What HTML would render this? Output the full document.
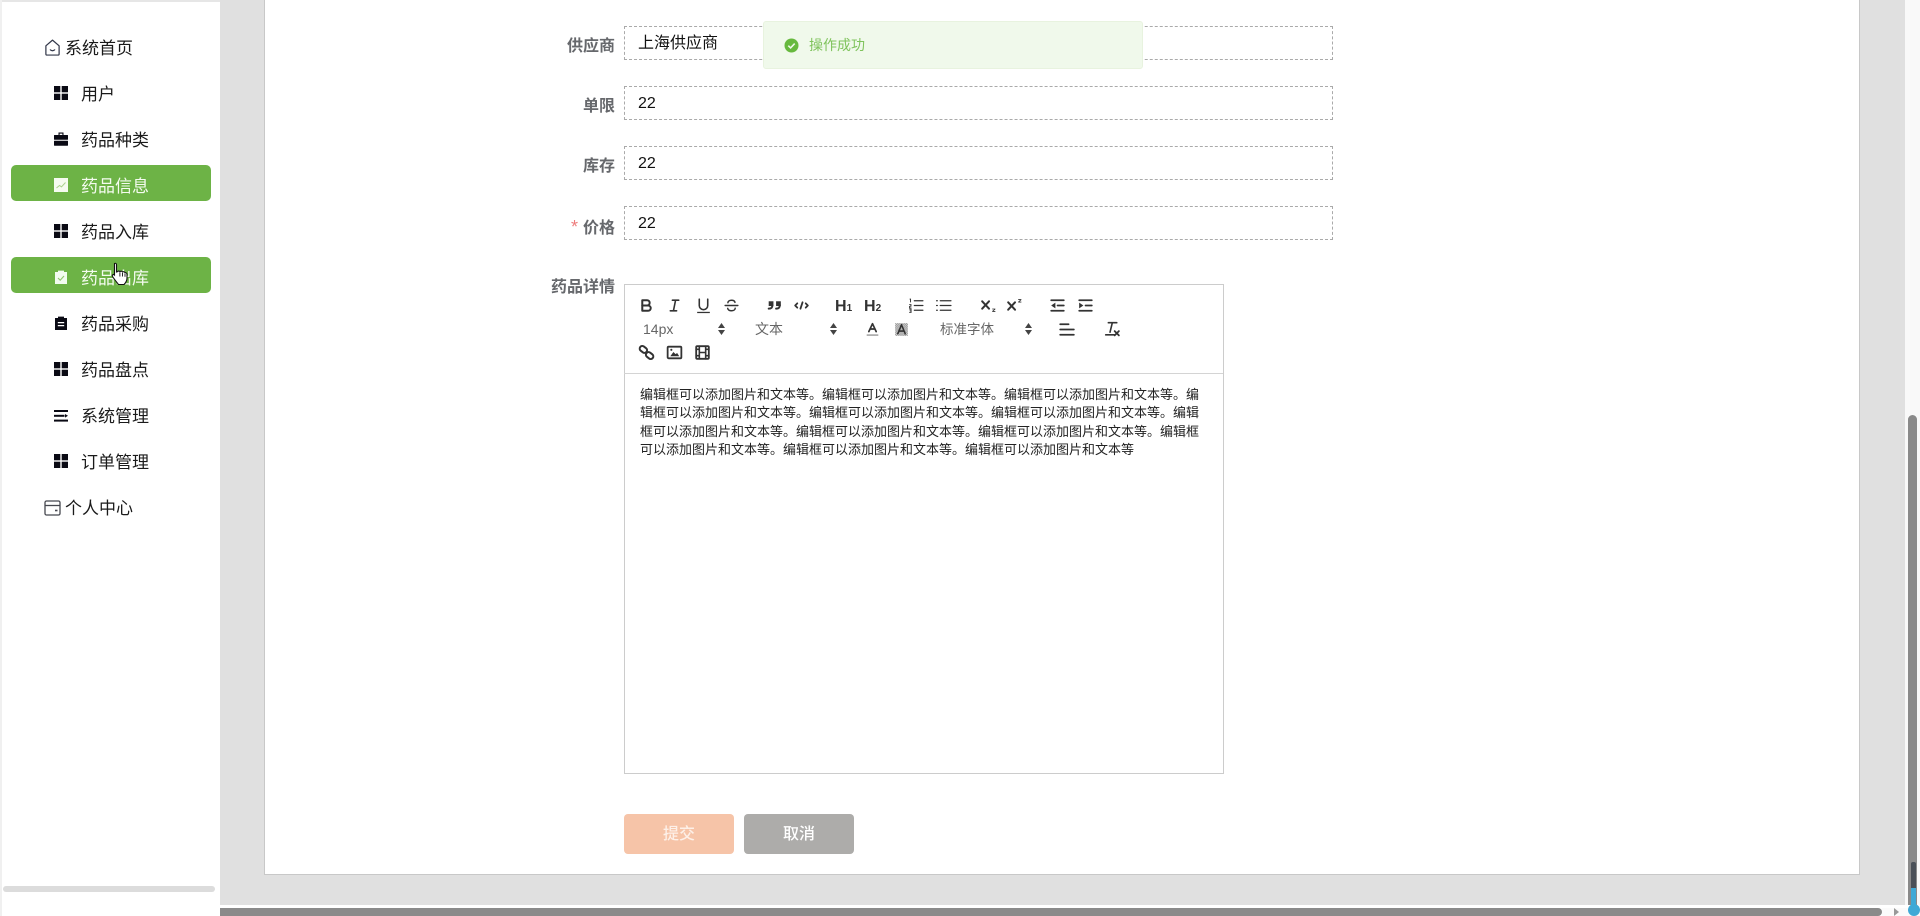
<!DOCTYPE html>
<html lang="zh">
<head>
<meta charset="utf-8">
<title>药品信息</title>
<style>
html,body{margin:0;padding:0;width:1920px;height:916px;overflow:hidden;background:#fff}
body{position:relative;font-family:"Liberation Sans","Noto Sans CJK SC",sans-serif;color:#111}
.a{position:absolute}
#side{left:2px;top:2px;width:218px;height:914px;background:#fff}
#bg{left:220px;top:0;width:1685px;height:905px;background:#e0e0e0}
#panel{left:264px;top:0;width:1594px;height:874px;background:#fff;border:1px solid #c8c8c8;border-top:none}
.hl{left:11px;width:200px;height:36px;background:#6db346;border-radius:5px}
.m{left:81px;height:24px;line-height:24px;font-size:17px;color:#1a1a1a;white-space:nowrap;margin-top:1px}
.m.w{color:#f4fbef}
.m.t{left:65px}
.i{left:54px;width:14px;height:14px}
.lb{height:24px;line-height:24px;font-size:16px;font-weight:700;color:#66686c;right:1305px;white-space:nowrap;margin-top:1.500px}
.inp{left:624px;width:707px;height:32px;border:1px dashed #aaa;box-sizing:content-box;font-size:16px;line-height:33px;color:#111;text-indent:13px}
#ed{left:624px;top:284px;width:598px;height:488px;border:1px solid #ccc;background:#fff}
#edl{left:624px;top:373px;width:599px;height:1px;background:#d4d4d4}
.ic{width:19px;height:19px;margin:1.500px;fill:none;stroke:#333;stroke-width:1.900;stroke-linecap:round;stroke-linejoin:round}
.ic .f{fill:#333;stroke:none}
.sel{font-size:13px;color:#666;height:20px;line-height:20px;white-space:nowrap}
.ar{width:9px;height:14px}
.hh{font-size:16px;font-weight:700;color:#333;height:22px;line-height:22px;white-space:nowrap;margin-top:1.500px}
.hh small{font-size:10px}
#txt{left:640px;top:386px;width:562px;font-size:13px;line-height:18.400px;color:#222;white-space:nowrap}
.btn{top:814px;width:110px;height:40px;border-radius:4px;color:#fff;font-size:16px;font-weight:500;line-height:41px;text-align:center}
#toast{left:763px;top:21px;width:380px;height:48px;background:#f0f9eb;border:1px solid #e8f3df;border-radius:3px;box-sizing:border-box}
#tt{left:809px;top:35px;font-size:14px;line-height:20px;color:#7fc35c;white-space:nowrap}
</style>
</head>
<body>
<div class="a" style="left:0;top:0;width:1920px;height:2px;background:#e6e6e6"></div>
<div class="a" style="left:0;top:0;width:2px;height:916px;background:#f0f0f0"></div>
<div class="a" id="side"></div>
<div class="a" id="bg"></div>
<div class="a" id="panel"></div>

<div class="a hl" style="top:165px"></div>
<div class="a hl" style="top:257px"></div>

<svg class="a" style="left:44px;top:39px" width="17" height="17" viewBox="0 0 17 18" fill="none" stroke="#33384a" stroke-width="1.300" stroke-linejoin="round"><path d="M1.500 7.200 8.500 1.200 15.500 7.200V16a1 1 0 0 1-1 1h-12a1 1 0 0 1-1-1Z"/><path d="M6.200 11.500c1.200 1.200 3.400 1.200 4.600 0" stroke-linecap="round"/></svg>
<div class="a m t" style="top:36px">系统首页</div>

<svg class="a i" style="top:86px" viewBox="0 0 14 14" fill="#0a0a14"><rect width="6.300" height="6.300"/><rect x="7.700" width="6.300" height="6.300"/><rect y="7.700" width="6.300" height="6.300"/><rect x="7.700" y="7.700" width="6.300" height="6.300"/></svg>
<div class="a m" style="top:82px">用户</div>

<svg class="a i" style="top:132px" viewBox="0 0 14 14" fill="#0a0a14"><path d="M4.500 3V.5h5V3H8.400V1.600H5.600V3Z"/><rect y="3" width="14" height="4.800" rx=".4"/><rect y="8.700" width="14" height="5" rx=".4"/></svg>
<div class="a m" style="top:128px">药品种类</div>

<svg class="a i" style="top:178px" viewBox="0 0 14 14"><rect width="14" height="14" fill="#f5fbf0"/><path d="M2.500 10 5.500 7.500 7.500 8.800 11.500 4.500" stroke="#a9d18c" stroke-width="1" fill="none"/></svg>
<div class="a m w" style="top:174px">药品信息</div>

<svg class="a i" style="top:224px" viewBox="0 0 14 14" fill="#0a0a14"><rect width="6.300" height="6.300"/><rect x="7.700" width="6.300" height="6.300"/><rect y="7.700" width="6.300" height="6.300"/><rect x="7.700" y="7.700" width="6.300" height="6.300"/></svg>
<div class="a m" style="top:220px">药品入库</div>

<svg class="a i" style="top:270px" viewBox="0 0 14 14"><path d="M1 2h3V.6h6V2h3v12H1Z" fill="#f2fbf0"/><path d="M4 8 6.200 10.200 10 6" stroke="#8fc46e" stroke-width="1.100" fill="none"/></svg>
<div class="a m w" style="top:266px">药品出库</div>

<svg class="a i" style="top:316px" viewBox="0 0 14 14" fill="#0a0a14"><path d="M1 2h3V.6h6V2h3v12H1Zm2.800 4v1.200h6.400V6Zm0 3v1.200h6.400V9Z" fill-rule="evenodd"/></svg>
<div class="a m" style="top:312px">药品采购</div>

<svg class="a i" style="top:362px" viewBox="0 0 14 14" fill="#0a0a14"><rect width="6.300" height="6.300"/><rect x="7.700" width="6.300" height="6.300"/><rect y="7.700" width="6.300" height="6.300"/><rect x="7.700" y="7.700" width="6.300" height="6.300"/></svg>
<div class="a m" style="top:358px">药品盘点</div>

<svg class="a i" style="top:409px" viewBox="0 0 14 14" fill="#0a0a14"><rect y="1" width="14" height="2"/><rect y="5.800" width="10.500" height="2"/><path d="M11 5 14 6.800 11 8.600Z"/><rect y="10.600" width="14" height="2"/></svg>
<div class="a m" style="top:404px">系统管理</div>

<svg class="a i" style="top:454px" viewBox="0 0 14 14" fill="#0a0a14"><rect width="6.300" height="6.300"/><rect x="7.700" width="6.300" height="6.300"/><rect y="7.700" width="6.300" height="6.300"/><rect x="7.700" y="7.700" width="6.300" height="6.300"/></svg>
<div class="a m" style="top:450px">订单管理</div>

<svg class="a" style="left:44px;top:500px" width="17" height="16" viewBox="0 0 17 16" fill="none" stroke="#45474f" stroke-width="1.300"><rect x="1" y="1" width="15" height="14" rx="1.500"/><path d="M1 5.500h15"/><path d="M11 10.500h2.500" stroke-width="1.600"/></svg>
<div class="a m t" style="top:496px">个人中心</div>

<div class="a" style="left:3px;top:886px;width:212px;height:6px;background:#dcdcdc;border-radius:3px"></div>

<!-- form -->
<div class="a lb" style="top:33px">供应商</div>
<div class="a inp" style="top:26px">上海供应商</div>
<div class="a lb" style="top:93px">单限</div>
<div class="a inp" style="top:86px">22</div>
<div class="a lb" style="top:153px">库存</div>
<div class="a inp" style="top:146px">22</div>
<div class="a lb" style="top:213px"><span style="color:#ee7c7c;font-weight:400;font-size:18px;margin-right:5px">*</span>价格</div>
<div class="a inp" style="top:206px">22</div>
<div class="a lb" style="top:274px">药品详情</div>

<div class="a" id="ed"></div>
<div class="a" id="edl"></div>

<!-- toolbar row 1 -->
<svg class="a ic" style="left:635px;top:294px" viewBox="0 0 18 18"><path d="M5,4H9.500A2.500,2.500,0,0,1,9.500,9H5Z"/><path d="M5,9h5.500A2.500,2.500,0,0,1,10.500,14H5Z"/></svg>
<svg class="a ic" style="left:663px;top:294px" viewBox="0 0 18 18"><path stroke-width="1.500" d="M7 4h6M5 14h6M8 14 10 4"/></svg>
<svg class="a ic" style="left:692px;top:294px" viewBox="0 0 18 18"><path stroke-width="1.500" d="M5,3V9a4,4,0,0,0,8,0V3"/><rect class="f" x="3" y="15" width="12" height="1.200"/></svg>
<svg class="a ic" style="left:720px;top:294px" viewBox="0 0 18 18"><path stroke-width="1.400" d="M3 9H15M12.300 6C12 4.600 10.600 4 9 4 7 4 5.600 5 5.600 6.400M12.500 11.600C12.500 13 11 14 9 14 7 14 5.500 13 5.400 11.700"/></svg>
<svg class="a ic" style="left:763px;top:294px" viewBox="0 0 18 18"><rect class="f" x="3.500" y="5" width="4.500" height="4.500"/><rect class="f" x="10.500" y="5" width="4.500" height="4.500"/><path d="M7 8.500C7 11 6 12 3.500 12M14 8.500C14 11 13 12 10.500 12"/></svg>
<svg class="a ic" style="left:790px;top:294px" viewBox="0 0 18 18"><path d="M5 7 3 9 5 11M13 7 15 9 13 11M10 6 8 12" stroke-width="1.700"/></svg>
<div class="a hh" style="left:835px;top:294px">H<small>1</small></div>
<div class="a hh" style="left:864px;top:294px">H<small>2</small></div>
<svg class="a ic" style="left:905px;top:294px" viewBox="0 0 18 18"><path stroke-width="1.300" d="M7 4.500h8M7 9h8M7 13.500h8"/><path class="f" d="M2.500 2.500h1.300v3.500h-.9V3.400h-.4ZM2 7.700h2.200v2.400H3v.9h1.300v.7H2V9.400h1.200v-1H2ZM2 12h2.300v4H2v-.7h1.300v-.9H2.400v-.7h.9v-.9H2Z"/></svg>
<svg class="a ic" style="left:932px;top:294px" viewBox="0 0 18 18"><path stroke-width="1.300" d="M6 4.500h10M6 9h10M6 13.500h10"/><path stroke-width="1.300" d="M2.500 4.500h.6M2.500 9h.6M2.500 13.500h.6"/></svg>
<svg class="a ic" style="left:977px;top:294px" viewBox="0 0 18 18"><path stroke-width="1.900" d="M3 5 9.500 12M9.500 5 3 12"/><path class="f" d="M12.500 12h3v.7l-1.800 1.500h1.800v.8h-3v-.7l1.800-1.600h-1.800Z"/></svg>
<svg class="a ic" style="left:1003px;top:294px" viewBox="0 0 18 18"><path stroke-width="1.900" d="M3 6 9.500 13M9.500 6 3 13"/><path class="f" d="M12.500 3h3v.8l-1.800 1.500h1.800v.8h-3v-.7l1.800-1.600h-1.800Z"/></svg>
<svg class="a ic" style="left:1046px;top:294px" viewBox="0 0 18 18"><path stroke-width="1.600" d="M3 4h12M9 9h6M3 14h12"/><path class="f" d="M7 6.300V11.700L3 9Z"/></svg>
<svg class="a ic" style="left:1074px;top:294px" viewBox="0 0 18 18"><path stroke-width="1.600" d="M3 4h12M9 9h6M3 14h12"/><path class="f" d="M3 6.300V11.700L7 9Z"/></svg>

<!-- toolbar row 2 -->
<div class="a sel" style="left:643px;top:319px;font-family:'Liberation Sans',sans-serif;font-size:14px">14px</div>
<svg class="a ar" style="left:717px;top:322px" viewBox="0 0 8 14" fill="#444"><path d="M4 1 7.500 6H.5ZM4 13 .5 8H7.500Z"/></svg>
<div class="a sel" style="left:755px;top:319px;font-size:14px">文本</div>
<svg class="a ar" style="left:829px;top:322px" viewBox="0 0 8 14" fill="#444"><path d="M4 1 7.500 6H.5ZM4 13 .5 8H7.500Z"/></svg>
<svg class="a ic" style="left:861px;top:318px" viewBox="0 0 18 18"><path stroke-width="1.600" d="M5.500 11 9 3.500 12.500 11M6.800 8.500h4.400"/><rect class="f" x="3.500" y="13.500" width="11" height="1.600" style="fill:#aaa"/></svg>
<svg class="a ic" style="left:890px;top:318px" viewBox="0 0 18 18"><defs><pattern id="ck" width="2" height="2" patternUnits="userSpaceOnUse"><rect width="1" height="1" fill="#666" stroke="none"/><rect x="1" y="1" width="1" height="1" fill="#666" stroke="none"/></pattern></defs><rect x="3" y="3" width="12" height="12" fill="url(#ck)" stroke="none"/><path stroke-width="1.500" d="M5.500 13 9 4.500 12.500 13M6.800 10.500h4.400"/></svg>
<div class="a sel" style="left:940px;top:320px;font-size:13.500px">标准字体</div>
<svg class="a ar" style="left:1024px;top:322px" viewBox="0 0 8 14" fill="#444"><path d="M4 1 7.500 6H.5ZM4 13 .5 8H7.500Z"/></svg>
<svg class="a ic" style="left:1055px;top:318px" viewBox="0 0 18 18"><path stroke-width="1.600" d="M3 4h8M3 9h13M3 14h13"/></svg>
<svg class="a ic" style="left:1100px;top:317px" viewBox="0 0 18 18"><path stroke-width="1.500" d="M6 3.500h8M9.800 3.500 7.600 12.500M3.500 15h8"/><path stroke-width="1.700" d="M12 11.500 16 15.500M16 11.500 12 15.500"/></svg>

<!-- toolbar row 3 -->
<svg class="a ic" style="left:635px;top:341px" viewBox="0 0 18 18"><rect x="2.500" y="3.500" width="7.500" height="5" rx="2.500" transform="rotate(38 6 5.750)"/><rect x="8" y="9.500" width="7.500" height="5" rx="2.500" transform="rotate(38 12 12.250)"/></svg>
<svg class="a ic" style="left:663px;top:341px" viewBox="0 0 18 18"><rect x="2.500" y="3.500" width="13" height="11" rx="1" stroke-width="1.700"/><path class="f" d="M5 12.500 8 8.500 10 10.500 11.500 9.500 13.500 12.500Z"/><circle class="f" cx="6" cy="6.500" r="1"/></svg>
<svg class="a ic" style="left:691px;top:341px" viewBox="0 0 18 18"><rect x="3" y="3" width="12" height="12" rx="1" stroke-width="1.700"/><path stroke-width="1.500" d="M6 3v12M12 3v12M6 9h6M3 6h3M3 12h3M12 6h3M12 12h3"/></svg>

<div class="a" id="txt">编辑框可以添加图片和文本等。编辑框可以添加图片和文本等。编辑框可以添加图片和文本等。编<br>辑框可以添加图片和文本等。编辑框可以添加图片和文本等。编辑框可以添加图片和文本等。编辑<br>框可以添加图片和文本等。编辑框可以添加图片和文本等。编辑框可以添加图片和文本等。编辑框<br>可以添加图片和文本等。编辑框可以添加图片和文本等。编辑框可以添加图片和文本等</div>

<div class="a btn" style="left:624px;background:#f6c4a8;color:#fdf0e8">提交</div>
<div class="a btn" style="left:744px;background:#adacaa">取消</div>

<!-- toast -->
<div class="a" id="toast"></div>
<svg class="a" style="left:784px;top:38px" width="15" height="15" viewBox="0 0 15 15"><circle cx="7.500" cy="7.500" r="7" fill="#67b93e"/><path d="M4.300 7.700 6.600 9.900 10.700 5.600" stroke="#f0f9eb" stroke-width="1.600" fill="none"/></svg>
<div class="a" id="tt">操作成功</div>

<!-- cursor -->
<svg class="a" style="left:111px;top:262px" width="18" height="24" viewBox="0 0 18 24"><path d="M3.500 1.500c1-.6 2 0 2 1.200V10l1-.3c.6-1 2-.8 2.500 0 .7-.8 2-.7 2.500.3.800-.6 2.200-.3 2.500.8.700-.3 2 .2 2 1.400V16c0 3-1.500 5-3 6.500H7.500C6 20.500 3.500 17.500 1.500 14.500c-.8-1.300.8-2.700 2-1.500V2.700c0-.5 0-1 0-1.200Z" fill="#fff" stroke="#111" stroke-width="1.100"/><path d="M8.900 10.500v4M11.500 11v3.500M14 11.800v3" stroke="#111" stroke-width=".9"/></svg>

<!-- scrollbars -->
<div class="a" style="left:1905px;top:0;width:15px;height:916px;background:#f9f9f9"></div>
<div class="a" style="left:1908px;top:415px;width:9px;height:501px;background:#8a8a8a;border-radius:5px 5px 0 0"></div>
<div class="a" style="left:220px;top:905px;width:1700px;height:3px;background:#fff"></div>
<div class="a" style="left:220px;top:908px;width:1662px;height:8px;background:#8a8a8a;border-radius:0 4px 4px 0"></div>
<div class="a" style="left:1882px;top:908px;width:38px;height:8px;background:#fbfbfb"></div>
<div class="a" style="left:1894px;top:908px;width:0;height:0;border-left:5px solid #999;border-top:4px solid transparent;border-bottom:4px solid transparent"></div>
<div class="a" style="left:1908px;top:860px;width:9px;height:45px;background:#8a8a8a"></div>
<div class="a" style="left:1911px;top:862px;width:5px;height:46px;background:#4a5058;border-radius:2px 2px 0 0"></div>
<div class="a" style="left:1911px;top:888px;width:5px;height:20px;background:#3fa9d6"></div>
<div class="a" style="left:1908px;top:904px;width:12px;height:12px;background:#3fa9d6;border-radius:50%"></div>
</body>
</html>
